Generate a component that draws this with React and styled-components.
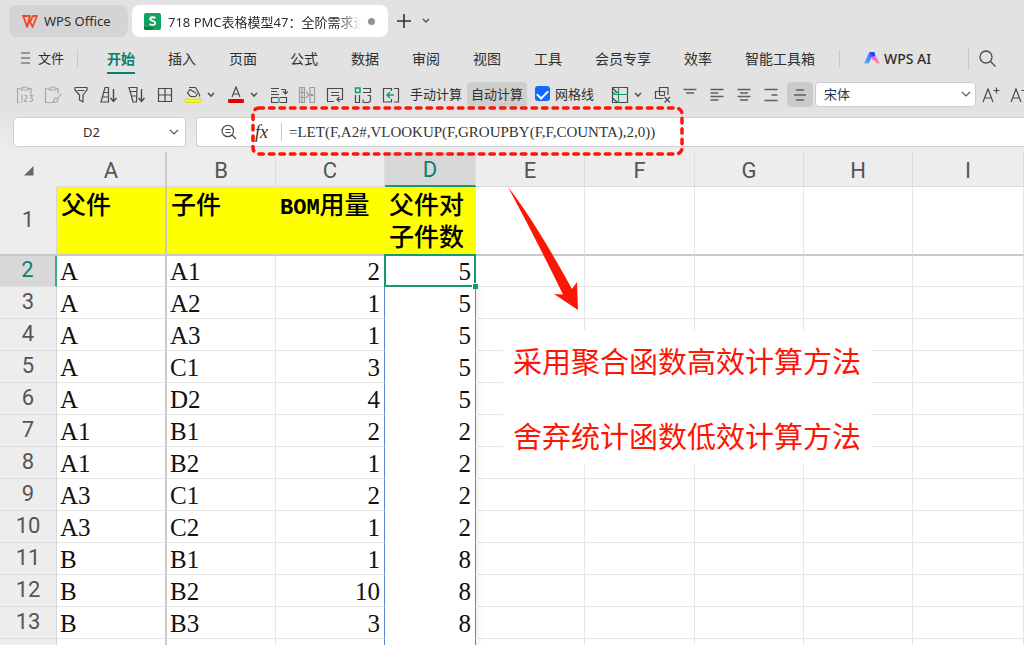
import styled, {createGlobalStyle, css} from 'styled-components';
import {useState} from 'react';

const GlobalStyle = createGlobalStyle`
  * {
    box-sizing: border-box;
  }
  body {
    margin: 0;
    overflow: hidden;
    background: #ffffff;
    color: #2e2e2e;
    font: 13px "Noto Sans", "Noto Sans CJK SC", sans-serif;
  }
  button, input, select {
    margin: 0;
    padding: 0;
    border: 0;
    background: none;
    color: inherit;
    font: inherit;
  }
  svg {
    display: block;
    flex: none;
  }
`;

const PageWrapper = styled.div`
  position: relative;
  height: 100vh;
  overflow: hidden;
`;

const HeaderWrapper = styled.header`
  display: flex;
  flex-direction: column;
  background: linear-gradient(#e2e2e2 112px, #ededed 152px);
`;

/* 标签栏 */
const TabBar = styled.div`
  display: flex;
  align-items: center;
  gap: 4px;
  height: 42px;
  padding: 0 9px;
`;
const FileTab = styled.button`
  display: flex;
  align-items: center;
  gap: ${props => props.$active ? '7px' : '6px'};
  flex: 0 0 ${props => props.$active ? '256px' : '119px'};
  min-width: 0;
  height: 32px;
  padding: 0 12px;
  border-radius: 8px;
  background: ${props => props.$active ? '#ffffff' : '#d4d4d4'};
  white-space: nowrap;
`;
const TabTitle = styled.span`
  flex: 1;
  min-width: 0;
  overflow: hidden;
  text-align: left;
  mask-image: ${props => props.$fade ? 'linear-gradient(90deg, #000 88%, transparent)' : 'none'};
`;
const Dot = styled.i`
  flex: none;
  width: 7px;
  height: 7px;
  margin-right: 1px;
  border-radius: 50%;
  background: #929292;
`;
const PlainButton = styled.button`
  display: flex;
  align-items: center;
  justify-content: center;
  width: ${props => props.$width || 28}px;
  height: 25px;
  flex: none;
`;

/* 菜单栏 */
const MenuBar = styled.nav`
  display: flex;
  align-items: center;
  height: 34px;
  padding-left: 20px;
  white-space: nowrap;
`;
const FileMenu = styled.button`
  display: flex;
  align-items: center;
  gap: 7px;
  width: 57px;
  padding-bottom: 3px;
`;
const Divider = styled.span`
  flex: none;
  width: 1px;
  height: ${props => props.$height || 18}px;
  margin: 0 ${props => props.$right || 0}px 0 ${props => props.$left || 0}px;
  background: #c9c9c9;
`;
const MenuList = styled.div`
  display: flex;
  gap: 33px;
`;
const MenuItem = styled.button`
  height: 30px;
  border-bottom: 2px solid ${props => props.$active ? '#0b7f6c' : 'transparent'};
  color: ${props => props.$active ? '#0b7f6c' : '#2e2e2e'};
  font-size: 14px;
  font-weight: ${props => props.$active ? 700 : 400};
`;
const AiButton = styled.button`
  display: flex;
  align-items: center;
  gap: 4px;
  width: 80px;
  padding-bottom: 2px;
  font-size: 14px;
  font-weight: 500;
`;

/* 工具栏 */
const ToolBar = styled.div`
  display: flex;
  align-items: center;
  height: 38px;
  padding: 0 0 1px 11px;
  white-space: nowrap;
`;
const SplitGroup = styled.div`
  display: flex;
  flex: none;
  margin-right: 7px;
`;
const TextButton = styled.button`
  flex: none;
  height: 25px;
  padding: 0 ${props => props.$active ? 4 : 5}px 2px;
  border-radius: 4px;
  background: ${props => props.$active ? '#cecece' : 'transparent'};
`;
const AlignButton = styled(PlainButton)`
  margin-left: ${props => props.$active ? 3 : 0}px;
  border-radius: 4px;
  background: ${props => props.$active ? '#cbcbcb' : 'transparent'};
`;
const CheckLabel = styled.label`
  display: flex;
  align-items: center;
  flex: none;
  gap: 5px;
  margin: 0 12px 0 8px;
  padding-bottom: 2px;
`;
const CheckInput = styled.input`
  appearance: none;
  width: 15px;
  height: 15px;
  border-radius: 3px;
  border: 1px solid #8a8a8a;

  &:checked {
    border: 0;
    background: #0f6bff;
  }
  &:checked::after {
    content: "";
    display: block;
    width: 5px;
    height: 9px;
    margin: 2px auto 0;
    border: solid #ffffff;
    border-width: 0 2px 2px 0;
    transform: rotate(45deg);
  }
`;
const SelectBox = styled.div`
  display: flex;
  align-items: center;
  flex: 0 0 161px;
  height: 25px;
  margin: 0 1px 0 2px;
  padding-right: 4px;
  border: 1px solid #cccccc;
  border-radius: 4px;
  background: #ffffff;
`;
const FontSelect = styled.select`
  flex: 1;
  appearance: none;
  padding: 0 0 1px 8px;
  outline: none;
  color: #24364d;
`;

/* 编辑栏 */
const FormulaBar = styled.div`
  display: flex;
  gap: 10px;
  padding: 3px 0 5px 13px;
`;
const InputBox = styled.div`
  display: flex;
  align-items: center;
  min-width: 0;
  height: 30px;
  border: 1px solid #d0d0d0;
  background: #ffffff;
  ${props => props.$grow ? css`
    flex: 1;
    padding-left: 23px;
    border-right: 0;
    border-radius: 4px 0 0 4px;
  ` : css`
    flex: 0 0 173px;
    padding-right: 6px;
    border-radius: 4px;
  `}
`;
const NameInput = styled.input`
  flex: 1;
  min-width: 0;
  outline: none;
  text-align: center;
`;
const FxButton = styled.button`
  width: 42px;
  padding-left: 17px;
  text-align: left;
  font: italic 18px "Liberation Serif", serif;
`;
const FormulaInput = styled.input`
  flex: 1;
  min-width: 0;
  outline: none;
  color: #333333;
  font: 15px "Liberation Serif", "Noto Sans CJK SC", serif;
`;

/* 表格 */
const SheetTable = styled.table`
  width: 100%;
  table-layout: fixed;
  border-collapse: separate;
  border-spacing: 0;
  color: #111111;
`;
const ColHead = styled.th`
  height: 35px;
  padding: 2px 0 0;
  border-right: ${props => props.$frozen ? '2px solid #c9c9c9' : '1px solid #dddddd'};
  border-bottom: ${props => props.$active ? '2px solid #169a68' : '1px solid #d8d8d8'};
  background: ${props => props.$active ? '#d8d8d8' : '#ededed'};
  color: ${props => props.$active ? '#0b8070' : '#555555'};
  font: 22px Roboto, sans-serif;
`;
const Corner = styled(ColHead)`
  border-color: #ededed;

  svg {
    margin: 2px 0 0 24px;
  }
`;
const RowHead = styled.th`
  height: ${props => props.$height}px;
  padding: 0 0 2px;
  border-right: ${props => props.$active ? '2px solid #3fa987' : '1px solid #d5d5d5'};
  border-bottom: ${props => props.$title ? '2px solid #c9c9c9' : '1px solid #dddddd'};
  background: ${props => props.$active ? '#d8d8d8' : '#ededed'};
  color: ${props => props.$active ? '#0b8070' : '#555555'};
  font: 22px Roboto, sans-serif;
  line-height: 24px;
`;
const Cell = styled.td`
  position: relative;
  padding: 2px 4px 0 3px;
  border-right: 1px solid #e6e6e6;
  border-bottom: 1px solid #e6e6e6;
  background: #ffffff;
  text-align: ${props => props.$number ? 'right' : 'left'};
  white-space: nowrap;
  font: 25px "Liberation Serif", "Noto Sans CJK SC", serif;
  line-height: 28px;
  ${props => props.$frozen && css`
    border-right: 2px solid #c9c9c9;
  `}
  ${props => props.$spill === 'left' && css`
    border-right-color: #5f86cc;
  `}
  ${props => props.$spill === 'right' && css`
    z-index: 1;
    border-right-color: #5f86cc;
    border-bottom-color: #ffffff;
    box-shadow: 0 0 8px rgba(0, 0, 0, .12);
    clip-path: inset(0 -8px 0 0);
  `}
  ${props => props.$selected && css`
    z-index: 2;
    &::before {
      content: "";
      position: absolute;
      inset: -2px -1px -1px -1px;
      border: 2px solid #169a68;
    }
    &::after {
      content: "";
      position: absolute;
      right: -3px;
      bottom: -3px;
      width: 5px;
      height: 5px;
      border: 1px solid #ffffff;
      border-width: 1px 0 0 1px;
      background: #169a68;
    }
  `}
`;
const TitleCell = styled(Cell)`
  padding: 0 0 0 4px;
  border-bottom: 2px solid #c9c9c9;
  vertical-align: top;
  font: 500 25px "Noto Sans CJK SC", sans-serif;
  line-height: 32px;
  ${props => props.$filled && css`
    border-right-color: ${props.$frozen ? '#c9c9c9' : '#ffff00'};
    background: #ffff00;
    color: #000000;
  `}
  ${props => props.$wrap && css`
    padding-right: 8px;
    border-bottom-color: #59ad52;
    white-space: normal;
  `}

  b {
    font: bold 22px "Liberation Mono", monospace;
  }
`;

/* 批注 */
const AnnotationLayer = styled.svg`
  position: absolute;
  z-index: 3;
  top: 0;
  left: 0;
  pointer-events: none;
`;
const Note = styled.div`
  position: absolute;
  z-index: 3;
  top: 330px;
  left: 503px;
  padding: 0 10px;
  background: #ffffff;
  color: #ff1504;
  font: 29px "Noto Sans CJK SC", sans-serif;
  white-space: nowrap;

  p {
    margin: 0;
    line-height: 60px;
  }
  p + p {
    margin-top: 15px;
  }
`;

const menus = ['开始', '插入', '页面', '公式', '数据', '审阅', '视图', '工具', '会员专享', '效率', '智能工具箱'];
const columns = ['A', 'B', 'C', 'D', 'E', 'F', 'G', 'H', 'I'];
const columnWidths = [57, 110, 109, 109, 91, 109, 110, 109, 109];
const rows = [
    ['A', 'A1', 2, 5],
    ['A', 'A2', 1, 5],
    ['A', 'A3', 1, 5],
    ['A', 'C1', 3, 5],
    ['A', 'D2', 4, 5],
    ['A1', 'B1', 2, 2],
    ['A1', 'B2', 1, 2],
    ['A3', 'C1', 2, 2],
    ['A3', 'C2', 1, 2],
    ['B', 'B1', 1, 8],
    ['B', 'B2', 10, 8],
    ['B', 'B3', 3, 8],
    [],
];

function Icon({w = 18, h = 18, children, color = '#4a4a4a'}) {
    return (
        <svg width={w} height={h} viewBox={`0 0 ${w} ${h}`} fill="none" stroke={color} strokeWidth="1.2" aria-hidden="true">
            {children}
        </svg>
    );
}

function Chevron({w = 10, width = 1.2, color = '#555555'}) {
    const h = w / 2 + 2;
    return (
        <Icon w={w} h={h} color={color}>
            <path d={`M1 1l${w / 2 - 1} ${w / 2 - 1}l${w / 2 - 1} -${w / 2 - 1}`} strokeWidth={width}/>
        </Icon>
    );
}

const PasteIcon = () => (
    <Icon color="#a9a9a9">
        <path d="M4 2.500H1.500v14h2M13 2.500h2v6M5 2h2l1-1h2l1 1h1.500v2h-7.500z"/>
        <path d="M5 10l1-.7v7M8.500 10q2-1.500 2.500 0q0 1.500-2.500 5.500h3M13.500 9.500h3l-1.500 2.500q2 .3 1.500 2.300q-1 2-3 .8"/>
    </Icon>
);
const BrushIcon = () => (
    <Icon color="#a9a9a9">
        <path d="M3.500 2.500h-2v14H8M12 2.500h2v5M5 2h2l1-1h2l1 1h1v2H5zM17.500 7.500l-4 5M10.500 12.500q2-1 3.500 1q0 3-5.500 3q1.500-1 2-4z"/>
    </Icon>
);
const FilterIcon = () => (
    <Icon>
        <path d="M3 1.500h12v2.500L11 9v7l-3.500-2V9L3 4zM5.500 4.500h7" strokeLinejoin="round"/>
    </Icon>
);
const SortIcon = ({down}) => (
    <Icon>
        <path d={down ? 'M1 1.500h8L8.500 16H5zM2 5.500h7M3 10h6' : 'M5 1.500h3.500V16H1zM4 6.500h4.500M2.500 11h6'}/>
        <path d="M13.500 3v12M10.500 12l3 3.500l3-3.500" strokeWidth="1.400"/>
    </Icon>
);
const BorderIcon = () => (
    <Icon>
        <path d="M2.500 2.500h13v13h-13zM9 2.500v13M2.500 9h13"/>
    </Icon>
);
const FillIcon = () => (
    <Icon>
        <path d="M5 1.500h6.500l3 5l-3 4h-5L3.500 7L6 3.500L12 7M15.500 7.500v3"/>
        <rect x="1" y="13" width="16" height="3.500" rx="1" fill="#fff900" stroke="#c9c900" strokeWidth=".5"/>
    </Icon>
);
const ColorIcon = () => (
    <Icon>
        <path d="M5 11L9 1l4 10M6.500 8h5"/>
        <rect x="1" y="13" width="16" height="4" rx="1" fill="#e60000" stroke="none"/>
    </Icon>
);
const SwapIcon = () => (
    <Icon>
        <path d="M1 2.500h8M1 5.500h6M1 8.500h8M11 3.500h4.500v4M13 5.500l2.500 2.500L18 5.500M8 11.500H1.500v5H8M10 11.500h6.500v5H10"/>
        <path d="M9 11v6" stroke="#169a68"/>
    </Icon>
);
const SplitIcon = () => (
    <Icon color="#9c9c9c">
        <path d="M1.500 1.500h5v15h-5zM1.500 6.500h5M1.500 11.500h5M4 1.500v15M8 6l3 3l-3 3M12 1.500h4.500v15H12z"/>
        <circle cx="14" cy="9" r="1" fill="#169a68" stroke="none"/>
    </Icon>
);
const WrapIcon = () => (
    <Icon>
        <path d="M8 15.500H1.500v-13h15v11H11M13.500 11L11 13.500L13.500 16M5 6.500h8M5 9.500h8"/>
    </Icon>
);
const TransposeIcon = () => (
    <Icon>
        <path d="M9 2.500h7.500v4H9M1.500 9v7.500h4V9M9 16.500h4.500q3 0 3-3V9.500M13.500 9.500h3M9 13.500v3"/>
        <path d="M1.500 2h4.500v4.500H1.500z" stroke="#169a68" strokeWidth="1.500"/>
    </Icon>
);
const InsertIcon = () => (
    <Icon>
        <path d="M9.500 5V2.500H1.500v13.500h8V13M12 2.500h4.500v13.500H12"/>
        <path d="M12 9H5M8 6L5 9l3 3" stroke="#169a68" strokeWidth="1.500"/>
    </Icon>
);
const FreezeIcon = () => (
    <Icon>
        <path d="M1.500 5V1.500H16.500V16.500H1.500V5M1.500 2l5 5M1.500 12l5 4.500M1.500 7l3 0"/>
        <path d="M7.500 1v16M1 8.500h16" stroke="#169a68"/>
    </Icon>
);
const ClearIcon = () => (
    <Icon>
        <path d="M9.500 12.500H1.500V5.500h9v4M5.500 9.500v-8h8.500v7.500M5.500 9.500h5M10.500 11l5.500 5.500M16 11l-5.500 5.500"/>
    </Icon>
);
const LineIcon = ({d}) => <Icon><path d={d} stroke="#606060" strokeWidth="1.400"/></Icon>;

const alignIcons = {
    '顶端对齐': 'M2.500 3.500h13M5 7h8',
    '左对齐': 'M2.500 3.500h13M2.500 7h8M2.500 10.500h13M2.500 14h8',
    '水平居中': 'M2.500 3.500h13M5 7h8M2.500 10.500h13M5 14h8',
    '右对齐': 'M2.500 3.500h13M9.500 9h6M2.500 14.500h13',
};

const FontSizeIcon = ({minus}) => (
    <Icon>
        <path d={`M1 16L6 3l5 13M3 12h6M11.500 4.500h6${minus ? '' : 'M14.500 1.500v6'}`}/>
    </Icon>
);

function Header() {
    const [current, setCurrent] = useState('开始');
    const [showGrid, setShowGrid] = useState(true);

    return (
        <HeaderWrapper>
            <TabBar>
                <FileTab>
                    <svg width="17" height="13" viewBox="0 0 17 13" fill="none" aria-hidden="true">
                        <path d="M1 1h8L6 12L2.500 1.500M6 12L9.500 4M8 4l3.500 8L16 1h-4L9 7" stroke="#f04a2c" strokeWidth="1.800" strokeLinejoin="round"/>
                    </svg>
                    <TabTitle>WPS Office</TabTitle>
                </FileTab>
                <FileTab $active>
                    <svg width="17" height="17" viewBox="0 0 17 17" aria-hidden="true">
                        <rect width="17" height="17" rx="2" fill="#10a45f"/>
                        <path d="M0 14h10l-3 3H2q-2 0-2-2z" fill="#087a43"/>
                        <path d="M11.300 5.300C9.800 3.900 6.300 3.700 6.200 5.900C6.200 8.300 11.200 7.400 11.200 10C11 12.500 7.100 12.300 5.600 10.800" fill="none" stroke="#ffffff" strokeWidth="1.900"/>
                    </svg>
                    <TabTitle $fade>718 PMC表格模型47：全阶需求运</TabTitle>
                    <Dot/>
                </FileTab>
                <PlainButton $width={24} aria-label="新建">
                    <Icon w={16} h={16} color="#333333"><path d="M8 1v14M1 8h14" strokeWidth="1.600"/></Icon>
                </PlainButton>
                <PlainButton $width={12} aria-label="更多标签"><Chevron w={8} width={1.5}/></PlainButton>
            </TabBar>

            <MenuBar>
                <FileMenu>
                    <Icon w={11} h={14}><path d="M1 2h9M1 7h9M1 12h9" strokeWidth="1.100"/></Icon>
                    文件
                </FileMenu>
                <Divider $right={29}/>
                <MenuList>
                    {
                        menus.map(item => (
                            <MenuItem key={item} $active={item === current} onClick={() => setCurrent(item)}>
                                {item}
                            </MenuItem>
                        ))
                    }
                </MenuList>
                <Divider $left={24} $right={24}/>
                <AiButton>
                    <svg width="16" height="14" viewBox="0 0 16 14" aria-hidden="true">
                        <defs>
                            <linearGradient id="aiBlue" x1="1" y1="0" x2="0" y2="1">
                                <stop stopColor="#314dff"/>
                                <stop offset="1" stopColor="#59b5ff"/>
                            </linearGradient>
                            <linearGradient id="aiPink" x1="0" y1="0" x2="1" y2="1">
                                <stop stopColor="#e34bff"/>
                                <stop offset="1" stopColor="#ffa07f"/>
                            </linearGradient>
                        </defs>
                        <path d="M5.500 1h5L4.500 12.500H0z" fill="url(#aiBlue)"/>
                        <path d="M6 1h4.500l1 4.500L8 6z" fill="#2d42f5"/>
                        <path d="M7.500 5.500h4.500l4 7h-3.500l-1.500-3H9z" fill="url(#aiPink)"/>
                    </svg>
                    WPS AI
                </AiButton>
                <Divider $height={22} $left={24} $right={5}/>
                <PlainButton aria-label="搜索">
                    <Icon><path d="M11.500 11.500l5 5M13 7a6 6 0 1 1-12 0a6 6 0 1 1 12 0z" strokeWidth="1.300"/></Icon>
                </PlainButton>
            </MenuBar>

            <ToolBar>
                <PlainButton aria-label="粘贴为数值"><PasteIcon/></PlainButton>
                <PlainButton aria-label="格式刷"><BrushIcon/></PlainButton>
                <PlainButton aria-label="筛选"><FilterIcon/></PlainButton>
                <PlainButton aria-label="升序"><SortIcon/></PlainButton>
                <PlainButton aria-label="降序"><SortIcon down/></PlainButton>
                <PlainButton aria-label="边框"><BorderIcon/></PlainButton>
                <SplitGroup>
                    <PlainButton aria-label="填充颜色"><FillIcon/></PlainButton>
                    <PlainButton $width={8} aria-label="选择填充颜色"><Chevron w={8} width={1.6}/></PlainButton>
                </SplitGroup>
                <SplitGroup>
                    <PlainButton aria-label="字体颜色"><ColorIcon/></PlainButton>
                    <PlainButton $width={8} aria-label="选择字体颜色"><Chevron w={8} width={1.6}/></PlainButton>
                </SplitGroup>
                <PlainButton aria-label="合并"><SwapIcon/></PlainButton>
                <PlainButton aria-label="分列"><SplitIcon/></PlainButton>
                <PlainButton aria-label="自动换行"><WrapIcon/></PlainButton>
                <PlainButton aria-label="转置"><TransposeIcon/></PlainButton>
                <PlainButton aria-label="插入列"><InsertIcon/></PlainButton>
                <TextButton>手动计算</TextButton>
                <TextButton $active>自动计算</TextButton>
                <CheckLabel>
                    <CheckInput type="checkbox" checked={showGrid} onChange={() => setShowGrid(!showGrid)}/>
                    网格线
                </CheckLabel>
                <SplitGroup>
                    <PlainButton aria-label="冻结窗格"><FreezeIcon/></PlainButton>
                    <PlainButton $width={8} aria-label="冻结选项"><Chevron w={8} width={1.6}/></PlainButton>
                </SplitGroup>
                <PlainButton $width={27} aria-label="清除"><ClearIcon/></PlainButton>
                {
                    Object.keys(alignIcons).map(name => (
                        <AlignButton key={name} $width={27} aria-label={name}><LineIcon d={alignIcons[name]}/></AlignButton>
                    ))
                }
                <AlignButton $active $width={26} aria-label="垂直居中">
                    <LineIcon d="M5 4h8M3 9h12M5 14h8"/>
                </AlignButton>
                <SelectBox>
                    <FontSelect aria-label="字体" defaultValue="宋体">
                        <option>宋体</option>
                    </FontSelect>
                    <Chevron/>
                </SelectBox>
                <PlainButton aria-label="增大字号"><FontSizeIcon/></PlainButton>
                <PlainButton aria-label="减小字号"><FontSizeIcon minus/></PlainButton>
            </ToolBar>

            <FormulaBar>
                <InputBox>
                    <NameInput aria-label="名称框" defaultValue="D2"/>
                    <Chevron/>
                </InputBox>
                <InputBox $grow>
                    <Icon>
                        <path d="M12 12l4 4M13.500 8a5.700 5.700 0 1 1-11.400 0a5.700 5.700 0 1 1 11.400 0zM5.500 6.500h5M5.500 9.500h5"/>
                    </Icon>
                    <FxButton aria-label="插入函数">fx</FxButton>
                    <Divider $right={7} $left={1}/>
                    <FormulaInput
                        aria-label="公式"
                        defaultValue="=LET(F,A2#,VLOOKUP(F,GROUPBY(F,F,COUNTA),2,0))"
                    />
                </InputBox>
            </FormulaBar>
        </HeaderWrapper>
    );
}

function Sheet() {
    const getSpill = (rowIndex, colIndex) => {
        if (rowIndex === 0) {
            return null;
        }
        return {2: 'left', 3: 'right'}[colIndex];
    };

    return (
        <SheetTable>
            <colgroup>
                {columnWidths.map((width, i) => <col key={i} width={width}/>)}
                <col/>
            </colgroup>
            <thead>
                <tr>
                    <Corner aria-label="全选">
                        <svg width="10" height="10" viewBox="0 0 10 10" aria-hidden="true">
                            <path d="M9.500 0v9.500H0z" fill="#666666"/>
                        </svg>
                    </Corner>
                    {
                        columns.map(name => (
                            <ColHead key={name} scope="col" $frozen={name === 'A'} $active={name === 'D'}>{name}</ColHead>
                        ))
                    }
                </tr>
            </thead>
            <tbody>
                <tr>
                    <RowHead scope="row" $title $height={69}>1</RowHead>
                    <TitleCell $filled $frozen>父件</TitleCell>
                    <TitleCell $filled>子件</TitleCell>
                    <TitleCell $filled><b>BOM</b>用量</TitleCell>
                    <TitleCell $filled $wrap>父件对子件数</TitleCell>
                    {columns.slice(4).map(name => <TitleCell key={name}/>)}
                </tr>
                {
                    rows.map((row, rowIndex) => (
                        <tr key={rowIndex}>
                            <RowHead scope="row" $active={rowIndex === 0} $height={rowIndex === 0 ? 31 : 32}>
                                {rowIndex + 2}
                            </RowHead>
                            {
                                columns.map((name, colIndex) => (
                                    <Cell
                                        key={name}
                                        $frozen={colIndex === 0}
                                        $number={colIndex > 1}
                                        $spill={getSpill(rowIndex, colIndex)}
                                        $selected={rowIndex === 0 && colIndex === 3}
                                    >
                                        {row[colIndex]}
                                    </Cell>
                                ))
                            }
                        </tr>
                    ))
                }
            </tbody>
        </SheetTable>
    );
}

function App() {
    return (
        <PageWrapper>
            <GlobalStyle/>
            <Header/>
            <Sheet/>
            <Note>
                <p>采用聚合函数高效计算方法</p>
                <p>舍弃统计函数低效计算方法</p>
            </Note>
            <AnnotationLayer width="700" height="320" viewBox="0 0 700 320" aria-hidden="true">
                <rect
                    x="253" y="108" width="429" height="46" rx="6"
                    fill="none" stroke="#ff1504" strokeWidth="3.500"
                    strokeDasharray="4.500 6" strokeLinecap="round"
                />
                <path d="M508 187Q534 220 572 289L577 282L578 310L554 294L563 294.500Q537 241 508 187z" fill="#ff1504"/>
            </AnnotationLayer>
        </PageWrapper>
    );
}

export default App;
